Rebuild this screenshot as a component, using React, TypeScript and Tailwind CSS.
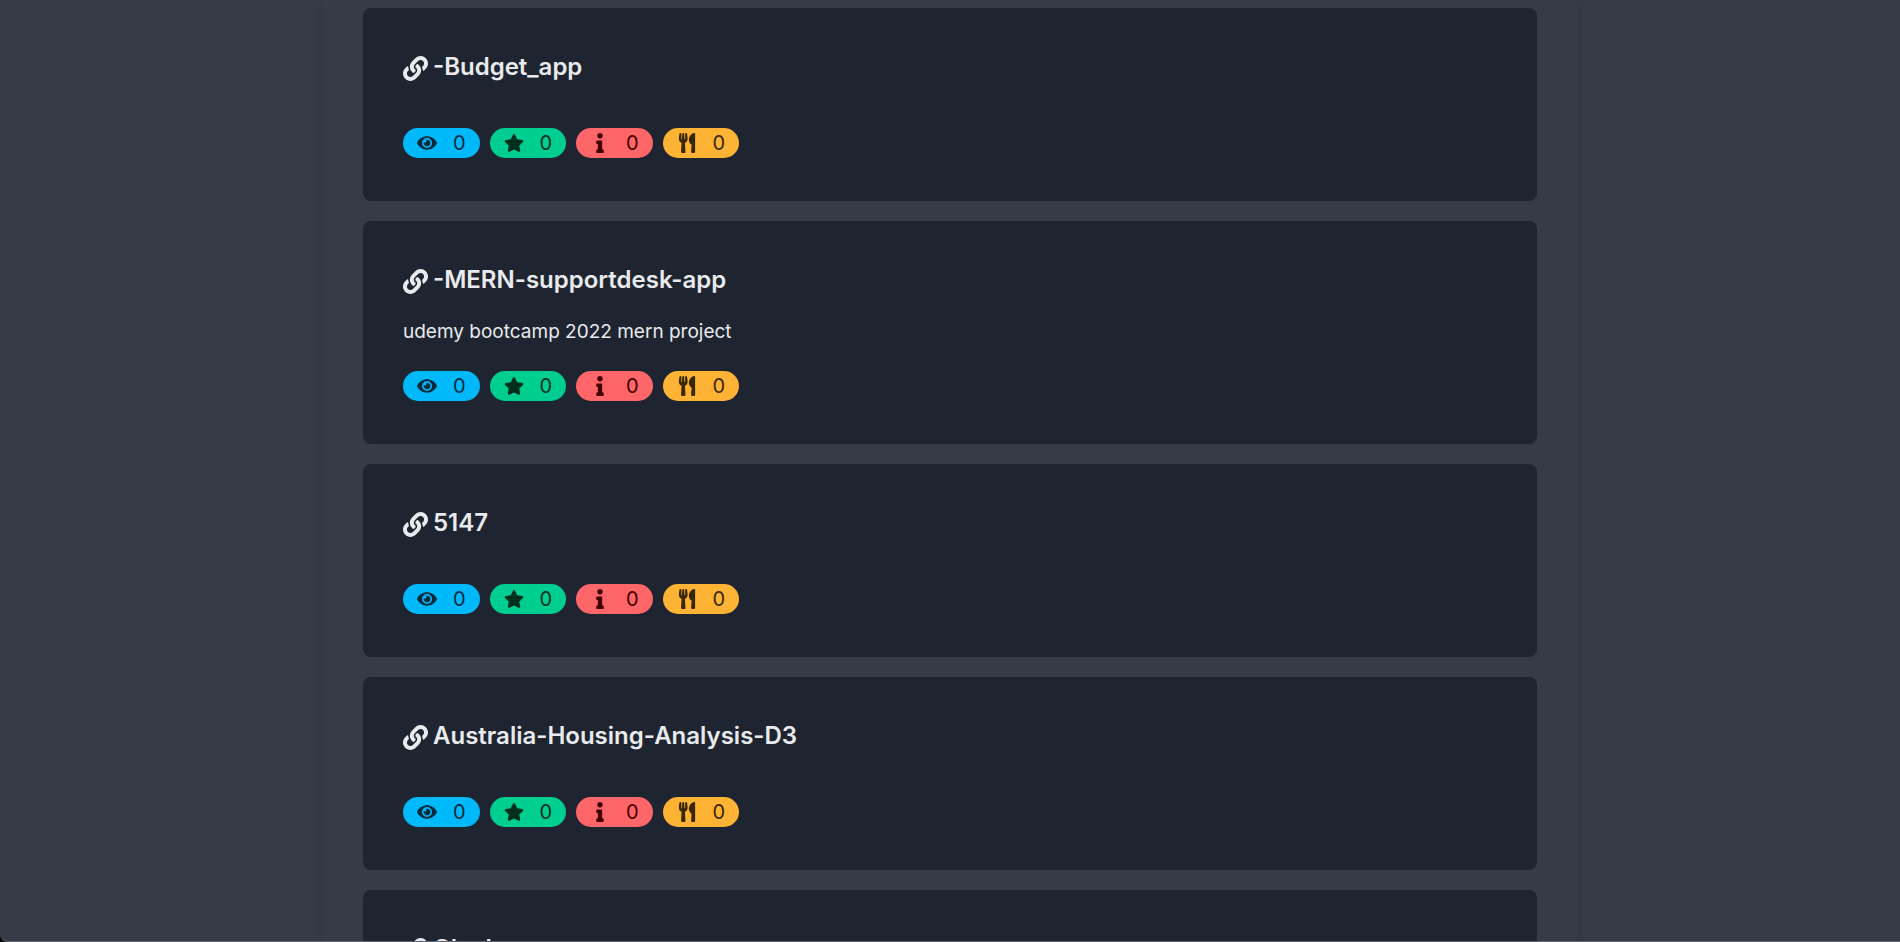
import React from "react";
import type { IconType } from "react-icons";
import { FaEye, FaInfo, FaLink, FaStar, FaUtensils } from "react-icons/fa";

type Repo = {
  name: string;
  description?: string;
  watchers: number;
  stars: number;
  issues: number;
  forks: number;
};

const repos: Repo[] = [
  { name: "-Budget_app", watchers: 0, stars: 0, issues: 0, forks: 0 },
  {
    name: "-MERN-supportdesk-app",
    description: "udemy bootcamp 2022 mern project",
    watchers: 0,
    stars: 0,
    issues: 0,
    forks: 0,
  },
  { name: "5147", watchers: 0, stars: 0, issues: 0, forks: 0 },
  { name: "Australia-Housing-Analysis-D3", watchers: 0, stars: 0, issues: 0, forks: 0 },
  { name: "Clock", watchers: 0, stars: 0, issues: 0, forks: 0 },
];

function Badge({ icon: Icon, label, value, tone }: { icon: IconType; label: string; value: number; tone: string }) {
  return (
    <li
      title={label}
      className={`flex h-[30px] items-center justify-between rounded-full px-[14px] text-[20px] leading-[30px] ${tone}`}
    >
      <Icon aria-hidden="true" className="size-5" />
      <span>{value}</span>
    </li>
  );
}

function RepoCard({ repo }: { repo: Repo }) {
  return (
    <article className="rounded-lg bg-[#1e2530] px-10 pt-[41px] pb-[43px]">
      <h3 className="pb-[19px] text-[24px] leading-[36px] font-semibold">
        <a href={`#${repo.name}`} className="flex items-center gap-[5px]">
          <FaLink aria-hidden="true" className="mt-[2px] size-[25px]" />
          {repo.name}
        </a>
      </h3>
      {repo.description && <p className="text-[19px] leading-[30px]">{repo.description}</p>}
      <ul className="mt-6 grid w-[336px] grid-cols-4 gap-[10px]">
        <Badge icon={FaEye} label="Watchers" value={repo.watchers} tone="bg-[#00b9fb] text-[#002b3d]" />
        <Badge icon={FaStar} label="Stars" value={repo.stars} tone="bg-[#00ce91] text-[#00301c]" />
        <Badge icon={FaInfo} label="Open issues" value={repo.issues} tone="bg-[#ff6669] text-[#470000]" />
        <Badge icon={FaUtensils} label="Forks" value={repo.forks} tone="bg-[#ffb334] text-[#382800]" />
      </ul>
    </article>
  );
}

export default function App() {
  return (
    <div className="h-screen overflow-y-auto bg-[#363c47] font-['Inter','Liberation_Sans',sans-serif] text-[#e9eaed] [scrollbar-width:none]">
      <main className="px-[17%]">
        <section className="flex flex-col gap-5 px-10 pt-2 pb-10 shadow-[0_0_10px] shadow-black/10">
          {repos.map((repo) => (
            <RepoCard key={repo.name} repo={repo} />
          ))}
        </section>
      </main>
      <div className="pointer-events-none fixed inset-0 rounded-bl-lg border-b border-[#5f636d] shadow-[0_0_0_8px_#000]" />
    </div>
  );
}
